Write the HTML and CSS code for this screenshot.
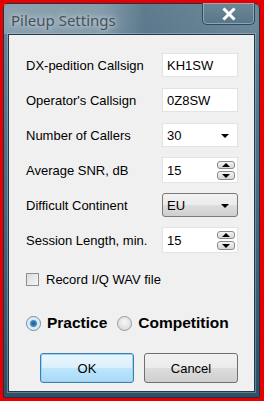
FILE: index.html
```html
<!DOCTYPE html>
<html>
<head>
  <title>Pileup Settings</title>
  <link rel="stylesheet" href="styles.css">
</head>
<body>

  <div class="window">
    <div class="titlebar">
      <span class="title">Pileup Settings</span>
      <button class="close-btn">
        <svg width="16" height="14" viewBox="0 0 16 14">
          <path d="M3.5 2.5 L12.5 11.5 M12.5 2.5 L3.5 11.5" stroke="#ffffff" stroke-width="3" stroke-linecap="square"/>
        </svg>
      </button>
    </div>

    <div class="panel">
      <div class="fields">
        <label>DX-pedition Callsign</label>
        <div class="edit">KH1SW</div>

        <label>Operator's Callsign</label>
        <div class="edit">0Z8SW</div>

        <label>Number of Callers</label>
        <div class="edit">30 <span class="arrow"></span></div>

        <label class="tall">Average SNR, dB</label>
        <div class="edit spin tall">15
          <span class="spin-btns"><span class="up"></span><span class="down"></span></span>
        </div>

        <label>Difficult Continent</label>
        <div class="combo">EU <span class="arrow"></span></div>

        <label class="tall">Session Length, min.</label>
        <div class="edit spin tall">15
          <span class="spin-btns"><span class="up"></span><span class="down"></span></span>
        </div>
      </div>

      <div class="check-row">
        <span class="checkbox"></span>
        <span>Record I/Q WAV file</span>
      </div>

      <div class="mode-row">
        <span class="radio checked"></span><span class="mode">Practice</span>
        <span class="radio"></span><span class="mode">Competition</span>
      </div>

      <div class="buttons">
        <button class="btn default">OK</button>
        <button class="btn">Cancel</button>
      </div>
    </div>
  </div>

</body>
</html>
```

FILE: styles.css
```css
body {
  margin: 0;
  background: #e60000;
  font-family: "Liberation Sans", Arial, sans-serif;
  width: 264px;
  height: 401px;
  overflow: hidden;
}
.window {
  margin: 3px 0 0 3px;
  width: 257px;
  height: 395px;
  border: 1px solid #1a3346;
  border-radius: 6px 6px 2px 2px;
  background: linear-gradient(to bottom, #6d8798 0%, #55738a 30%, #2f4f66 100%);
  padding: 0 4px;
  box-sizing: border-box;
  display: flex;
  flex-direction: column;
}
.titlebar {
  height: 30px;
  display: flex;
  align-items: flex-start;
  justify-content: space-between;
  background: linear-gradient(to right, rgba(160,178,190,0.6) 0%, rgba(160,178,190,0.5) 38%, rgba(40,80,105,0.2) 55%, rgba(120,145,160,0.25) 100%);
  margin: 0 -4px;
  padding: 0 4px 0 7px;
}
.title {
  font-family: "Noto Sans", "Open Sans", sans-serif;
  font-size: 15px;
  color: #44525c;
  margin-top: 6px;
  text-shadow: 0 0 8px #c8d4da, 0 0 4px #c8d4da;
}
.close-btn {
  width: 53px;
  height: 22px;
  margin-top: -1px;
  border: 1px solid #2f4a5c;
  border-top: none;
  border-radius: 0 0 5px 5px;
  background: linear-gradient(to bottom, #6c8797, #587688);
  box-shadow: inset 0 0 0 1px rgba(190,210,220,0.5);
  padding: 0;
  display: flex;
  align-items: center;
  justify-content: center;
}
.panel {
  flex: 1;
  margin-bottom: 5px;
  background: #f0f0f0;
  border: 1px solid #1f3a4c;
  box-shadow: 0 0 0 1px rgba(200,215,225,0.35);
  padding: 18px 16px 0 17px;
  font-size: 13px;
  color: #000;
}
.fields {
  display: grid;
  grid-template-columns: 1fr 76px;
  grid-auto-rows: 24px;
  row-gap: 11px;
  align-items: center;
}
.fields .tall {
  height: 26px;
}
.fields label.tall {
  display: flex;
  align-items: center;
}
.edit {
  height: 24px;
  background: #ffffff;
  border: 1px solid #e2e3e4;
  box-sizing: border-box;
  padding: 0 4px;
  display: flex;
  align-items: center;
  position: relative;
}
.arrow {
  position: absolute;
  right: 8px;
  top: 10px;
  width: 0;
  height: 0;
  border-left: 4px solid transparent;
  border-right: 4px solid transparent;
  border-top: 4px solid #000;
}
.combo {
  height: 24px;
  box-sizing: border-box;
  border: 1px solid #7a7a7a;
  border-radius: 3px;
  background: linear-gradient(to bottom, #f2f2f2 0%, #ebebeb 50%, #dddddd 51%, #cfcfcf 100%);
  padding: 0 4px;
  display: flex;
  align-items: center;
  position: relative;
}
.spin-btns {
  position: absolute;
  right: 2px;
  top: 3px;
  display: flex;
  flex-direction: column;
  gap: 2px;
}
.spin-btns span {
  width: 18px;
  height: 8px;
  box-sizing: border-box;
  border: 1px solid #8a8a8a;
  border-radius: 3px;
  background: linear-gradient(to bottom, #f4f4f4, #d6d6d6);
  position: relative;
}
.spin-btns .down {
  height: 9px;
}
.spin-btns span::after {
  content: "";
  position: absolute;
  left: 4px;
  border-left: 4px solid transparent;
  border-right: 4px solid transparent;
}
.spin-btns .up::after {
  top: 1px;
  border-bottom: 4px solid #000;
}
.spin-btns .down::after {
  top: 2px;
  border-top: 4px solid #000;
}
.check-row {
  display: flex;
  align-items: center;
  gap: 7px;
  margin-top: 19px;
  height: 16px;
}
.checkbox {
  flex-shrink: 0;
  width: 13px;
  height: 13px;
  box-sizing: border-box;
  border: 1px solid #8e8f8f;
  background: linear-gradient(135deg, #dcdcdc, #f6f6f6);
}
.mode-row {
  display: flex;
  align-items: center;
  margin-top: 28px;
  height: 16px;
  font-weight: bold;
  font-size: 15.5px;
}
.radio {
  flex-shrink: 0;
  width: 15px;
  height: 15px;
  border-radius: 50%;
  box-sizing: border-box;
  border: 1px solid #9a9a9a;
  background: radial-gradient(circle at 50% 40%, #f8f8f8, #d2d2d2);
  margin-right: 6px;
}
.radio.checked {
  background: radial-gradient(circle, #1b5a8a 0, #3d8fc8 3px, #d7e4ee 4px, #eef2f5 7px);
  border-color: #6b8aa3;
}
.mode {
  margin-right: 10px;
}
.buttons {
  display: flex;
  gap: 10px;
  margin-top: 22px;
  padding-left: 14px;
}
.btn {
  width: 96px;
  height: 30px;
  font-family: inherit;
  font-size: 13px;
  color: #000;
  border: 1px solid #707070;
  border-radius: 3px;
  background: linear-gradient(to bottom, #f2f2f2 0%, #ebebeb 50%, #dddddd 51%, #cfcfcf 100%);
}
.btn.default {
  border-color: #3c7fb1;
  background: linear-gradient(to bottom, #eaf6fd 0%, #d9f0fc 50%, #bee6fd 51%, #a7d9f5 100%);
  box-shadow: inset 0 0 0 1px #9ed2f1;
}
```
